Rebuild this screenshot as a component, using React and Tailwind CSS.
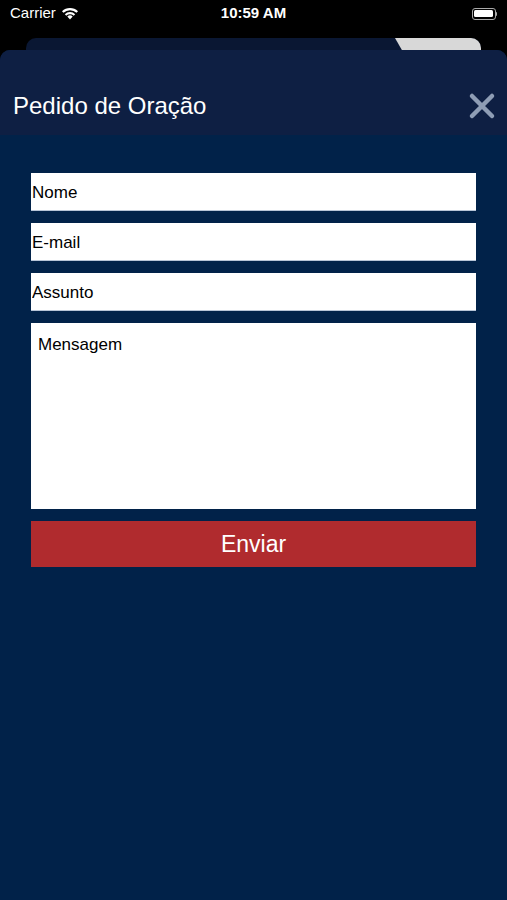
import { useState } from "react";

const fields = ["Nome", "E-mail", "Assunto"];

const App = () => {
    const [values, setValues] = useState({});

    return (
        <div className="w-[507px] h-[900px] bg-black flex flex-col overflow-hidden" style={{ fontFamily: '"Liberation Sans", Arial, sans-serif' }}>
            {/* status bar */}
            <div className="h-[27px] flex items-center justify-between px-[10px] text-white text-[15px]">
                <div className="flex items-center gap-[5px] w-[120px]">
                    <span>Carrier</span>
                    <svg width="18" height="13" viewBox="0 0 18 13">
                        <path d="M9 12.5 L6.3 9.6 A4 4 0 0 1 11.7 9.6 Z" fill="white" />
                        <path d="M3.8 7.2 A7.5 7.5 0 0 1 14.2 7.2 L12.7 8.7 A5.4 5.4 0 0 0 5.3 8.7 Z" fill="white" />
                        <path d="M1 4.3 A11.5 11.5 0 0 1 17 4.3 L15.5 5.8 A9.4 9.4 0 0 0 2.5 5.8 Z" fill="white" />
                    </svg>
                </div>
                <span className="font-semibold text-[15px]">10:59 AM</span>
                <div className="w-[120px] flex justify-end">
                    <div className="flex items-center">
                        <div className="w-[24px] h-[12px] rounded-[3px] border border-[#aaa] p-[1.5px]">
                            <div className="w-full h-full bg-white rounded-[1.5px]"></div>
                        </div>
                        <div className="w-[1.5px] h-[4px] bg-[#aaa] rounded-r"></div>
                    </div>
                </div>
            </div>

            {/* card behind */}
            <div className="h-[23px] flex items-end px-[26px] pt-[11px]">
                <div className="h-[12px] w-[456px] rounded-t-[10px] bg-[#0a1733] flex justify-end overflow-hidden">
                    <div className="w-[86px] h-full bg-[#d8d8d8] [clip-path:polygon(0_0,100%_0,100%_100%,8%_100%)]"></div>
                </div>
            </div>

            {/* sheet */}
            <div className="flex-1 rounded-t-[10px] bg-[#012249] flex flex-col overflow-hidden">
                <div className="h-[85px] bg-[#0e1f43] flex items-center justify-between pl-[13px] pr-[11px] pt-[28px] pb-[2px]">
                    <span className="text-white text-[24px]">Pedido de Oração</span>
                    <svg width="28" height="28" viewBox="0 0 28 28">
                        <path d="M4 4 L24 24 M24 4 L4 24" stroke="#8e9db5" strokeWidth="4.5" strokeLinecap="round" />
                    </svg>
                </div>

                <div className="flex flex-col px-[31px] pt-[38px] gap-[12px] w-[507px]">
                    {fields.map(f => (
                        <input
                            key={f}
                            className="h-[38px] w-[445px] bg-white text-[17px] text-black placeholder:text-black px-[1px] pt-[2px] outline-none border-b border-[#b7c4d6]"
                            placeholder={f}
                            value={values[f] || ""}
                            onChange={(e) => setValues({ ...values, [f]: e.target.value })}
                        />
                    ))}
                    <textarea
                        className="h-[186px] w-[445px] bg-white text-[17px] text-black placeholder:text-black px-[7px] pt-[9px] outline-none resize-none"
                        placeholder="Mensagem"
                    ></textarea>
                    <button className="h-[46px] w-[445px] bg-[#b02b2e] text-white text-[23px]">Enviar</button>
                </div>
            </div>
        </div>
    )
}

export default App
